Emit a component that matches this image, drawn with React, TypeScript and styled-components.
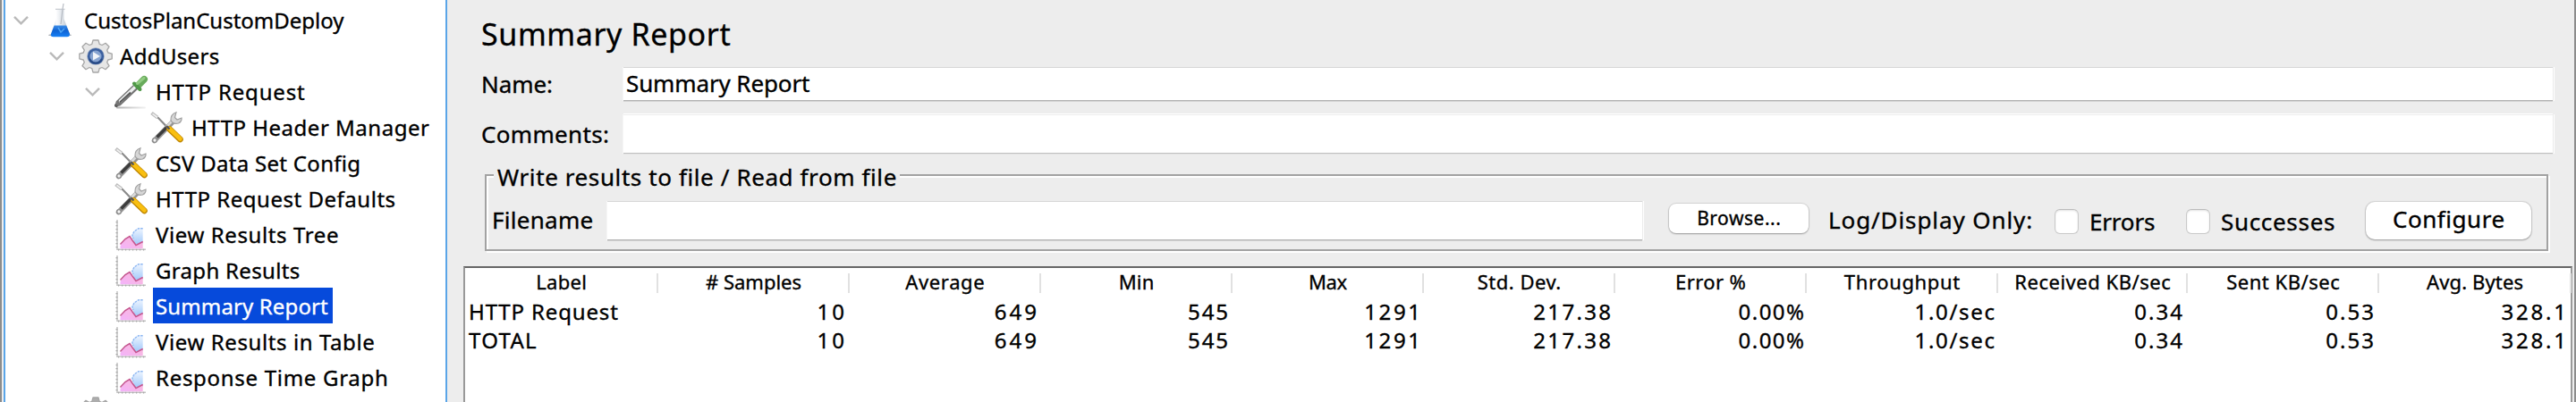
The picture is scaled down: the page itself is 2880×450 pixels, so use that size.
import React from 'react';
import styled, { createGlobalStyle } from 'styled-components';

const Global = createGlobalStyle`
  *, *::before, *::after { box-sizing: border-box; }
  body { margin: 0; background: #ededed; overflow: hidden; }
`;

const Window = styled.div`
  display: flex;
  width: 2880px;
  height: 450px;
  overflow: hidden;
  background: #ededed;
  border-left: 2px solid #8c8c8c;
  border-right: 2px solid #8c8c8c;
  padding-left: 2px;
  color: #000;
  font-family: 'Noto Sans', 'Open Sans', sans-serif;
  white-space: nowrap;
`;

const Text = styled.span<{ $size?: number; $track?: number }>`
  font-size: ${p => p.$size ?? 26}px;
  letter-spacing: ${p => p.$track ?? 0}px;
  margin-right: ${p => -(p.$track ?? 0)}px;
  -webkit-text-stroke: 0.35px currentColor;
`;

/* ---- test plan tree ---- */

const TreePane = styled.nav`
  width: 496px;
  height: 460px;
  flex: none;
  padding-top: 2px;
  background: #fff;
  border-left: 2px solid #5aa5e8;
  border-right: 2px solid #5aa5e8;
`;

const TreeRow = styled.div<{ $depth: number }>`
  display: flex;
  align-items: flex-start;
  height: 40px;
  padding-left: ${p => 9 + p.$depth * 40}px;
`;

const Twisty = styled.div`
  width: 33px;
  padding-top: 15px;
  line-height: 0;
`;

const IconBox = styled.div`
  width: 43px;
  padding-top: 2px;
  line-height: 0;
`;

const NodeLabel = styled.div<{ $selected?: boolean }>`
  display: flex;
  height: 40px;
  line-height: 42px;
  padding: 0 5px 0 3px;
  background: ${p => (p.$selected ? '#064adb' : 'transparent')};
  color: ${p => (p.$selected ? '#fff' : '#000')};
`;

const Chevron = () => (
  <svg width="18" height="12" viewBox="0 0 18 12" fill="none">
    <path d="M1 1.8 L8.5 9.3 L16 1.8" stroke="#bababa" strokeWidth="2.4" />
  </svg>
);

const FlaskIcon = () => (
  <svg width="38" height="38" viewBox="0 0 38 38">
    <defs>
      <linearGradient id="glass" x1="0" x2="1" y1="0" y2="0">
        <stop offset="0" stopColor="#c3c9d0" />
        <stop offset="0.3" stopColor="#fbfcfd" />
        <stop offset="0.6" stopColor="#dde2e8" />
        <stop offset="1" stopColor="#b9c0c9" />
      </linearGradient>
      <linearGradient id="liquid" x1="0" x2="0" y1="0" y2="1">
        <stop offset="0" stopColor="#3f8fe8" />
        <stop offset="0.45" stopColor="#0f62d2" />
        <stop offset="1" stopColor="#1580f6" />
      </linearGradient>
    </defs>
    <ellipse cx="19" cy="35.2" rx="13" ry="1.5" fill="#9fa5ac" />
    <path d="M15 6 H23.5 V17 L30 34 Q30 37 27 37 H11 Q8.5 37 9 34 L15 17 Z" fill="url(#glass)" />
    <path d="M12.6 24.500 H26.200 L30 34 Q30 37.200 27 37.200 H11.500 Q8.500 37.200 9 34 Z" fill="url(#liquid)" />
    <path d="M14 6.300 H24.500" stroke="#c6cad0" strokeWidth="1.200" />
    <path d="M23 0 L22 6 L20 23" stroke="#b8bdc4" strokeWidth="1.200" fill="none" />
    <path d="M17 27 L20 32 L24 28" stroke="#4ba4f6" strokeWidth="1.500" fill="none" />
  </svg>
);

const GEAR =
  'M16 1 H22 L23.2 5.4 L26 6.5 L30 4.3 L34 8.3 L31.7 12.2 L32.8 15 L37.2 16.2 V21.8 L32.8 23 L31.7 25.8 L34 29.7 L30 33.7 L26 31.5 L23.2 32.6 L22 37 H16 L14.8 32.6 L12 31.5 L8 33.7 L4 29.7 L6.3 25.8 L5.2 23 L0.8 21.8 V16.2 L5.2 15 L6.3 12.2 L4 8.3 L8 4.3 L12 6.5 L14.8 5.4 Z';

const GearIcon = ({ disabled = false }: { disabled?: boolean }) => (
  <svg width="38" height="38" viewBox="0 0 38 38">
    <path
      d={GEAR}
      fill={disabled ? '#adadad' : '#e6e6e6'}
      stroke={disabled ? '#a5a5a5' : '#a6a6a6'}
      strokeWidth="1.3"
      strokeLinejoin="round"
    />
    {!disabled && (
      <>
        <circle cx="19" cy="19" r="9.800" fill="#9cabc4" />
        <circle cx="19" cy="19" r="7.800" fill="#86a3d0" stroke="#3a5f9f" strokeWidth="2.600" />
        <path d="M12 22 A7.600 7.600 0 0 0 26 22" stroke="#294b86" strokeWidth="2" fill="none" />
        <path d="M16 14 L24 19 L16 23.500 Z" fill="#f1f4f9" />
      </>
    )}
  </svg>
);

const DropperIcon = () => (
  <svg width="38" height="38" viewBox="0 0 38 38" fill="none">
    <defs>
      <linearGradient id="shade" x1="0" x2="1" y1="0" y2="0">
        <stop offset="0" stopColor="#b0b0b0" />
        <stop offset="1" stopColor="#f2f2f2" />
      </linearGradient>
    </defs>
    <rect x="2" y="35.600" width="33" height="2" rx="1" fill="url(#shade)" />
    <path d="M2 34 L7.500 28.500" stroke="#5c5c5c" strokeWidth="4" strokeLinecap="round" />
    <path d="M5 31 L23.500 13.500" stroke="#757575" strokeWidth="7" strokeLinecap="round" />
    <path d="M6.500 29 L24 12.500" stroke="#eceeee" strokeWidth="3.400" strokeLinecap="round" />
    <path d="M6 30.500 L18 19.500" stroke="#555" strokeWidth="1.700" />
    <path d="M26.500 11.500 L33.200 4.800" stroke="#68ab5b" strokeWidth="7.600" strokeLinecap="round" />
    <path d="M22 9.500 L28.500 16" stroke="#4f9847" strokeWidth="4" strokeLinecap="round" />
    <path d="M25.500 9.500 L33 3.300" stroke="#92cc83" strokeWidth="3" strokeLinecap="round" />
  </svg>
);

const ToolsIcon = () => (
  <svg width="38" height="38" viewBox="0 0 38 38" fill="none">
    <path d="M3 4 L9 8 L20 19.500" stroke="#8a8a8a" strokeWidth="2.200" />
    <path d="M1.500 2.500 L8 7.500" stroke="#bdbdbd" strokeWidth="4" />
    <path d="M2.500 3.300 L8 7.500" stroke="#efefef" strokeWidth="1.600" />
    <path d="M4.500 33.500 L26 11.500" stroke="#959595" strokeWidth="5.600" strokeLinecap="round" />
    <path d="M7.500 29.500 L18 19" stroke="#3c3c3c" strokeWidth="3.400" />
    <path d="M18 18 L26 10" stroke="#dadada" strokeWidth="2.600" />
    <path d="M29 1.700 Q22.500 4 23 10.500 Q25 15.500 31.500 14 Q35.500 12 35 8 L30 10 L27.500 7.500 Z" fill="#d6d6d6" stroke="#a0a0a0" strokeWidth="1.200" />
    <circle cx="5" cy="33" r="2.300" fill="#f5f5f5" stroke="#8b8b8b" strokeWidth="1.300" />
    <path d="M21.500 20.500 L33.500 32" stroke="#bf8600" strokeWidth="6.600" strokeLinecap="round" />
    <path d="M21.500 20 L33.500 31.500" stroke="#f9bf10" strokeWidth="4.600" strokeLinecap="round" />
    <path d="M18 17 L21.500 20.500" stroke="#555" strokeWidth="2.400" />
  </svg>
);

const ChartIcon = () => (
  <svg width="38" height="38" viewBox="0 0 38 38" fill="none">
    <defs>
      <linearGradient id="sky" x1="0" x2="0" y1="0" y2="1">
        <stop offset="0" stopColor="#eef5ff" />
        <stop offset="1" stopColor="#a5cbfa" />
      </linearGradient>
      <linearGradient id="pink" x1="1" x2="0" y1="0" y2="1">
        <stop offset="0" stopColor="#fbb9d6" />
        <stop offset="1" stopColor="#f3b3fb" />
      </linearGradient>
    </defs>
    <path d="M3 2 V35.200 H35" stroke="#c4c4c4" strokeWidth="1.500" />
    <path d="M2.500 4 V36" stroke="#a9a9a9" strokeWidth="2" strokeDasharray="1.200 2.800" />
    <path d="M4 35.600 H35" stroke="#a9a9a9" strokeWidth="1.800" strokeDasharray="1.200 2.800" />
    <path d="M31.700 11.500 H26 L21.500 15 L19.500 20 L22.500 29 H31.700 Z" fill="url(#sky)" />
    <path d="M31.700 11.700 H27 L22 15 L19.800 19.500 L21 23" stroke="#8fb8f2" strokeWidth="1.400" strokeDasharray="2.600 1" />
    <path d="M6.500 31 L12 23.500 L17 20.500 L20 25 L24 30 L31.700 26 V34.300 H6.500 Z" fill="url(#pink)" />
    <path d="M6.500 29.500 L12 23.500 L17 20.500 L20 25 L24 30.500 L31.700 26.500" stroke="#c4568f" strokeWidth="1.500" />
  </svg>
);

type Icon = () => React.JSX.Element;
type Node = { label: string; depth: number; icon: Icon; track: number; open?: boolean; selected?: boolean };

const nodes: Node[] = [
  { label: 'CustosPlanCustomDeploy', depth: 0, icon: FlaskIcon, track: 0, open: true },
  { label: 'AddUsers', depth: 1, icon: GearIcon, track: 0.34, open: true },
  { label: 'HTTP Request', depth: 2, icon: DropperIcon, track: 0.84, open: true },
  { label: 'HTTP Header Manager', depth: 3, icon: ToolsIcon, track: 0.51 },
  { label: 'CSV Data Set Config', depth: 2, icon: ToolsIcon, track: 0.3 },
  { label: 'HTTP Request Defaults', depth: 2, icon: ToolsIcon, track: 0.52 },
  { label: 'View Results Tree', depth: 2, icon: ChartIcon, track: 0.61 },
  { label: 'Graph Results', depth: 2, icon: ChartIcon, track: 0.32 },
  { label: 'Summary Report', depth: 2, icon: ChartIcon, track: 0.13, selected: true },
  { label: 'View Results in Table', depth: 2, icon: ChartIcon, track: 0.6 },
  { label: 'Response Time Graph', depth: 2, icon: ChartIcon, track: 0.71 },
];

/* ---- report panel ---- */

const Panel = styled.main`
  display: flex;
  flex-direction: column;
  flex: 1;
  min-width: 0;
  padding: 4px 2px 0 18px;
`;

const Title = styled.h1`
  display: flex;
  margin: 0 0 3px 20px;
  height: 68px;
  line-height: 68px;
  font-weight: 400;
`;

const Field = styled.label<{ $height: number }>`
  display: flex;
  align-items: center;
  height: ${p => p.$height}px;
  margin: 0 22px 15px 20px;
`;

const FieldName = styled.span<{ $height: number }>`
  display: flex;
  width: 159px;
  flex: none;
  line-height: ${p => p.$height}px;
`;

const TextBox = styled.div<{ $light?: boolean }>`
  display: flex;
  flex: 1;
  height: 100%;
  padding-left: 3px;
  line-height: 35px;
  background: #fff;
  border-top: 1px solid ${p => (p.$light ? '#ececec' : '#d6d6d6')};
  border-bottom: 1px solid ${p => (p.$light ? '#c0c0c0' : '#b2b2b2')};
  box-shadow: 1px 0 0 #ebebeb, 2px 0 0 #fff, -1px 0 0 #f6f6f6,
    0 1px 0 ${p => (p.$light ? '#e3e3e3' : '#d3d3d3')}${p => (p.$light ? ', 0 -1px 0 #fff' : '')};
`;

const Group = styled.section`
  display: flex;
  flex-direction: column;
  align-items: flex-start;
  height: 86px;
  margin: 8px 27px 0 24px;
  border: 2px solid #a2a2a2;
  box-shadow: 2px 2px 0 #fff, inset 2px 2px 0 #fff;
`;

const Legend = styled.div`
  display: flex;
  flex: none;
  height: 36px;
  line-height: 36px;
  margin: -17px 0 0 8px;
  padding: 0 4px;
  background: #ededed;
`;

const FileRow = styled.div`
  display: grid;
  flex: none;
  grid-template-columns: 129px 1187px 178px 253px 147px 202px 185px;
  align-items: start;
  height: 45px;
  margin-top: 9px;
  padding-left: 6px;
  line-height: 42px;
`;

const FileBox = styled(TextBox)`
  width: 1157px;
  height: 44px;
`;

const Button = styled.button<{ $small?: boolean }>`
  display: flex;
  justify-content: center;
  width: ${p => (p.$small ? 156 : 185)}px;
  height: ${p => (p.$small ? 33 : 42)}px;
  margin-top: ${p => (p.$small ? 3 : 1)}px;
  margin-left: ${p => (p.$small ? 0 : -1)}px;
  padding: 0;
  border: 0;
  border-radius: ${p => (p.$small ? 8 : 10)}px;
  background: #fff;
  color: #000;
  font-family: inherit;
  line-height: ${p => (p.$small ? 33 : 38)}px;
  box-shadow: 0 0 1px 1px rgba(0, 0, 0, 0.1), 0 1px 2px rgba(0, 0, 0, 0.28);
`;

const Check = styled.label`
  display: flex;
  align-items: center;
  gap: 12px;
  line-height: 46px;
`;

const CheckSquare = styled.span`
  width: 27px;
  height: 28px;
  border: 1px solid #c9c9c9;
  border-top-color: #bcbcbc;
  border-radius: 6px;
  background: #fff;
  box-shadow: inset 0 1px 2px rgba(0, 0, 0, 0.12);
`;

/* ---- results table ---- */

const Table = styled.div`
  flex: 1;
  margin-top: 17px;
  background: #fff;
  border: solid #999;
  border-width: 2px 2px 0;
  border-top-color: #666;
`;

const Row = styled.div<{ $header?: boolean }>`
  display: grid;
  grid-template-columns: 216px repeat(7, 214px) 212px 214px 215px;
  height: ${p => (p.$header ? 33 : 32)}px;
  line-height: ${p => (p.$header ? 31 : 32)}px;
`;

const HeaderCell = styled.div`
  display: flex;
  justify-content: center;
  height: 22px;
  margin-top: 6px;
  padding-left: 1px;
  line-height: 19px;
  border-right: 2px solid #e1e1e1;
`;

const Cell = styled.div<{ $end?: number }>`
  display: flex;
  justify-content: ${p => (p.$end === undefined ? 'flex-start' : 'flex-end')};
  padding: 0 ${p => p.$end ?? 0}px 0 4px;
`;

type Column = { head: string; headTrack: number; value: string; track: number; end: number };

const columns: Column[] = [
  { head: '# Samples', headTrack: 0, value: '10', track: 3, end: 6 },
  { head: 'Average', headTrack: 0.64, value: '649', track: 3, end: 5 },
  { head: 'Min', headTrack: 0.18, value: '545', track: 1.9, end: 5 },
  { head: 'Max', headTrack: -0.4, value: '1291', track: 2.6, end: 4 },
  { head: 'Std. Dev.', headTrack: 0.5, value: '217.38', track: 2.33, end: 5 },
  { head: 'Error %', headTrack: 0.4, value: '0.00%', track: 1.47, end: 3 },
  { head: 'Throughput', headTrack: 0.65, value: '1.0/sec', track: 1.69, end: 4 },
  { head: 'Received KB/sec', headTrack: 0.52, value: '0.34', track: 2.04, end: 6 },
  { head: 'Sent KB/sec', headTrack: 0.52, value: '0.53', track: 2.04, end: 6 },
  { head: 'Avg. Bytes', headTrack: 0.14, value: '328.1', track: 2.8, end: 6 },
];

const rows = [
  { label: 'HTTP Request', track: 0.85 },
  { label: 'TOTAL', track: 1.3 },
];

export default function App() {
  return (
    <>
      <Global />
      <Window>
        <TreePane>
          {nodes.map(n => (
            <TreeRow key={n.label} $depth={n.depth}>
              <Twisty>{n.open && <Chevron />}</Twisty>
              <IconBox><n.icon /></IconBox>
              <NodeLabel $selected={n.selected}>
                <Text $size={24} $track={n.track}>{n.label}</Text>
              </NodeLabel>
            </TreeRow>
          ))}
          <TreeRow $depth={1}>
            <Twisty />
            <IconBox><GearIcon disabled /></IconBox>
          </TreeRow>
        </TreePane>
        <Panel>
          <Title><Text $size={34} $track={0.62}>Summary Report</Text></Title>
          <Field $height={38}>
            <FieldName $height={38}><Text $track={-0.08}>Name:</Text></FieldName>
            <TextBox><Text $track={-0.12}>Summary Report</Text></TextBox>
          </Field>
          <Field $height={44}>
            <FieldName $height={44}><Text $track={0.33}>Comments:</Text></FieldName>
            <TextBox $light />
          </Field>
          <Group>
            <Legend><Text $track={0.6}>Write results to file / Read from file</Text></Legend>
            <FileRow>
              <Text $track={0.28}>Filename</Text>
              <FileBox />
              <Button $small><Text $size={21} $track={0.52}>Browse...</Text></Button>
              <Text $track={0.9}>Log/Display Only:</Text>
              <Check><CheckSquare /><Text $track={-0.18}>Errors</Text></Check>
              <Check><CheckSquare /><Text $track={0.68}>Successes</Text></Check>
              <Button><Text $track={0.54}>Configure</Text></Button>
            </FileRow>
          </Group>
          <Table>
            <Row $header>
              <HeaderCell><Text $size={22} $track={0.3}>Label</Text></HeaderCell>
              {columns.map(c => (
                <HeaderCell key={c.head}><Text $size={22} $track={c.headTrack}>{c.head}</Text></HeaderCell>
              ))}
            </Row>
            {rows.map(r => (
              <Row key={r.label}>
                <Cell><Text $size={24} $track={r.track}>{r.label}</Text></Cell>
                {columns.map(c => (
                  <Cell key={c.head} $end={c.end}><Text $size={24} $track={c.track}>{c.value}</Text></Cell>
                ))}
              </Row>
            ))}
          </Table>
        </Panel>
      </Window>
    </>
  );
}
